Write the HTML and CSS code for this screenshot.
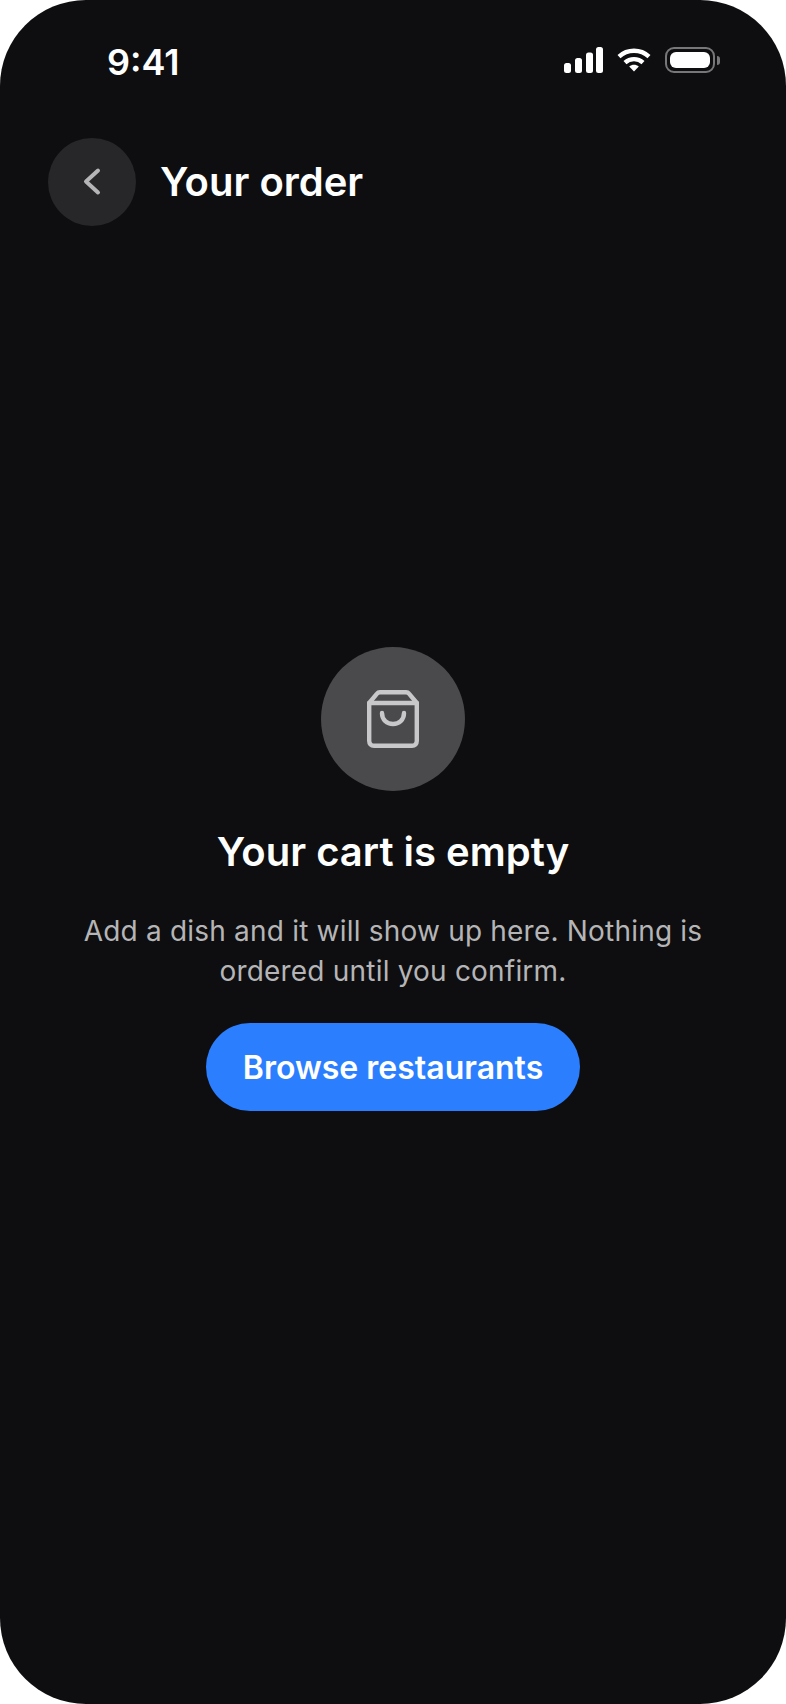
FILE: index.html
```html
<!DOCTYPE html>
<html lang="en">
<head>
    <meta charset="UTF-8" />
    <title>Your order</title>
    <link rel="stylesheet" href="styles.css">
</head>
<body>
<div class="phone">
    <div class="status-bar">
        <span class="time">9:41</span>
        <div class="status-icons">
            <svg class="icon-signal" width="39" height="26" viewBox="0 0 39 26" fill="#fff">
                <rect x="0" y="16" width="7" height="10" rx="2.5"/>
                <rect x="11" y="11" width="7" height="15" rx="2.5"/>
                <rect x="22" y="5.500" width="7" height="20.500" rx="2.5"/>
                <rect x="32" y="0" width="7" height="26" rx="2.5"/>
            </svg>
            <svg class="icon-wifi" width="34" height="25" viewBox="0 0 34 25" fill="none" stroke="#fff" stroke-width="4.4">
                <path d="M2 8.6C10.5 .8 23.5 .8 32 8.6"/>
                <path d="M8 14.6C13 10 21 10 26 14.6"/>
                <path d="M12.2 18.6L17 23.6L21.8 18.6C19 16 15 16 12.2 18.6Z" fill="#fff" stroke="none"/>
            </svg>
            <div class="battery">
                <div class="battery-level"></div>
            </div>
            <div class="battery-cap"></div>
        </div>
    </div>

    <div class="header">
        <button class="back-btn">
            <svg width="24" height="32" viewBox="0 0 24 32" fill="none" stroke="#b5b5b7" stroke-width="4" stroke-linecap="round" stroke-linejoin="round">
                <path d="M18 4.500L6 15.500L18 26.500"/>
            </svg>
        </button>
        <h1>Your order</h1>
    </div>

    <div class="empty-state">
        <div class="empty-icon">
            <svg width="52" height="58" viewBox="0 0 52 58" fill="none" stroke="#c8c8ca" stroke-width="4.4" stroke-linecap="round" stroke-linejoin="round">
                <path d="M2.200 13L10 3.600C10.700 2.700 11.700 2.200 12.800 2.200H39.200C40.300 2.200 41.300 2.700 42 3.600L49.800 13V50.800C49.800 53.800 48 55.800 45 55.800H7C4 55.800 2.200 53.800 2.200 50.800Z"/>
                <path d="M2.200 13H49.800"/>
                <path d="M15 23C15 30 20 34 26 34C32 34 37 30 37 23"/>
            </svg>
        </div>
        <h2>Your cart is empty</h2>
        <p>Add a dish and it will show up here. Nothing is ordered until you confirm.</p>
        <button class="browse-btn">Browse restaurants</button>
    </div>
</div>
</body>
</html>
```

FILE: styles.css
```css
body {
    margin: 0;
    background-color: #fff;
    font-family: 'Inter', sans-serif;
}

.phone {
    width: 786px;
    height: 1704px;
    background-color: #0e0e10;
    border-radius: 86px;
    overflow: hidden;
    color: #fff;
}

.status-bar {
    display: flex;
    justify-content: space-between;
    align-items: center;
    height: 44px;
    padding: 40px 66px 0 107px;
}

.time {
    font-size: 36px;
    font-weight: 600;
}

.status-icons {
    display: flex;
    align-items: center;
    margin-bottom: 4px;
}

.icon-wifi {
    margin-left: 14px;
}

.battery {
    box-sizing: border-box;
    width: 50px;
    height: 26px;
    margin-left: 14px;
    padding: 3px;
    border: 2px solid #77777a;
    border-radius: 9px;
}

.battery-level {
    width: 100%;
    height: 100%;
    background-color: #fff;
    border-radius: 6px;
}

.battery-cap {
    width: 3px;
    height: 9px;
    margin-left: 2px;
    background-color: #77777a;
    border-radius: 0 3px 3px 0;
}

.header {
    display: flex;
    align-items: center;
    gap: 24px;
    padding: 54px 48px 0;
}

.back-btn {
    display: flex;
    align-items: center;
    justify-content: center;
    width: 88px;
    height: 88px;
    padding: 0;
    border: none;
    border-radius: 50%;
    background-color: #272729;
}

h1 {
    margin: -2px 0 0;
    font-size: 40px;
    font-weight: 600;
}

.empty-state {
    display: flex;
    flex-direction: column;
    align-items: center;
    padding: 421px 64px 0;
    text-align: center;
}

.empty-icon {
    display: flex;
    align-items: center;
    justify-content: center;
    width: 144px;
    height: 144px;
    border-radius: 50%;
    background-color: #4a4a4c;
}

h2 {
    margin: 35px 0 0;
    font-size: 40px;
    line-height: 52px;
    font-weight: 600;
}

p {
    margin: 33px 0 0;
    font-size: 28px;
    line-height: 40px;
    letter-spacing: 0.2px;
    color: #b5b5b7;
}

.browse-btn {
    height: 88px;
    margin-top: 32px;
    padding: 0 37px;
    border: none;
    border-radius: 44px;
    background-color: #2b7fff;
    color: #fff;
    font-family: inherit;
    font-size: 32px;
    font-weight: 600;
}
```
